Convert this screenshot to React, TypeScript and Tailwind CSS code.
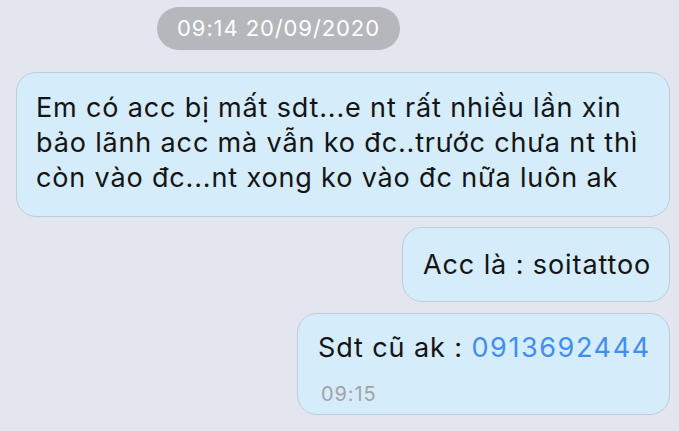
export default function App() {
  return (
    <div
      className="w-[679px] h-[431px] overflow-hidden bg-[#e3e6ef] flex flex-col"
      style={{ fontFamily: "Inter, 'Noto Sans', sans-serif" }}
    >
      <div className="flex pt-[7px] pl-[157px]">
        <div className="h-[43px] w-[243px] rounded-full bg-[#b4b7bc] text-white text-[22px] tracking-[0.9px] flex items-center justify-center">
          09:14 20/09/2020
        </div>
      </div>

      <div className="mt-[22px] ml-[16px] mr-[9px] rounded-[20px] bg-[#d5ecfb] border-[1.5px] border-[#bfcdd6] px-[19px] pt-[17px] pb-[21px] text-[27px] tracking-[0.85px] leading-[35px] text-[#141414]">
        Em có acc bị mất sdt...e nt rất nhiều lần xin
        <br />
        bảo lãnh acc mà vẫn ko đc..trước chưa nt thì
        <br />
        còn vào đc...nt xong ko vào đc nữa luôn ak
      </div>

      <div className="flex justify-end mt-[10px] mr-[9px]">
        <div className="h-[75px] w-[268px] rounded-[20px] bg-[#d5ecfb] border-[1.5px] border-[#bfcdd6] pl-[20px] pt-[2px] flex items-center text-[27px] tracking-[0.9px] text-[#141414]">
          Acc là : soitattoo
        </div>
      </div>

      <div className="flex justify-end mt-[11px] mr-[9px]">
        <div className="w-[373px] h-[102px] rounded-[20px] bg-[#d5ecfb] border-[1.5px] border-[#bfcdd6] pl-[20px] pt-[16px] flex flex-col">
          <div className="text-[27px] tracking-[0.9px] leading-[35px] text-[#141414]">
            Sdt cũ ak : <span className="text-[#3f8ef0] tracking-[1.6px]">0913692444</span>
          </div>
          <div className="text-[20px] tracking-[0.9px] leading-[24px] text-[#a3a3a3] mt-[17px] ml-[3px]">09:15</div>
        </div>
      </div>
    </div>
  );
}
